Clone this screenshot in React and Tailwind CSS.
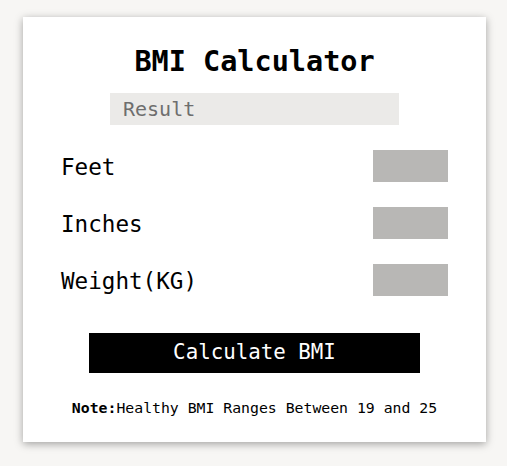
import { useState } from "react";

export default function App() {
  const [feet, setFeet] = useState("");
  const [inches, setInches] = useState("");
  const [weight, setWeight] = useState("");
  const [result, setResult] = useState("");

  function calculate() {
    const h = (Number(feet) * 12 + Number(inches)) * 0.0254;
    if (!h || !weight) return;
    setResult((Number(weight) / (h * h)).toFixed(1));
  }

  const rows = [
    { label: "Feet", value: feet, set: setFeet },
    { label: "Inches", value: inches, set: setInches },
    { label: "Weight(KG)", value: weight, set: setWeight },
  ];

  return (
    <div className="min-h-screen bg-[#f7f6f4] pt-[17px] font-['DejaVu_Sans_Mono',monospace]">
      <div className="ml-[23px] w-[463px] h-[425px] bg-white shadow-[0_2px_8px_rgba(0,0,0,0.35)] flex flex-col items-center">
        <h1 className="mt-[26px] h-[38px] leading-[38px] text-[28.5px] font-bold text-black">
          BMI Calculator
        </h1>
        <div className="mt-[12px] w-[289px] h-[32px] bg-[#ebeae8] pl-[13px] text-[20px] leading-[32px] text-[#6e6e6e]">
          {result || "Result"}
        </div>
        <div className="mt-[25px] w-full px-[38px] flex flex-col gap-[25px]">
          {rows.map(r => (
            <div key={r.label} className="flex items-center justify-between h-[32px]">
              <span className="pt-[3px] text-[22.6px] text-black">{r.label}</span>
              <input
                value={r.value}
                onChange={e => r.set(e.target.value)}
                className="w-[75px] h-[32px] bg-[#b8b7b5] outline-none px-1 text-[16px]"
              />
            </div>
          ))}
        </div>
        <button
          onClick={calculate}
          className="mt-[37px] w-[331px] h-[40px] bg-black text-white text-[20.8px]"
        >
          Calculate BMI
        </button>
        <p className="mt-[24px] text-[14.8px] text-black">
          <span className="font-bold">Note:</span>Healthy BMI Ranges Between 19 and 25
        </p>
      </div>
    </div>
  );
}
